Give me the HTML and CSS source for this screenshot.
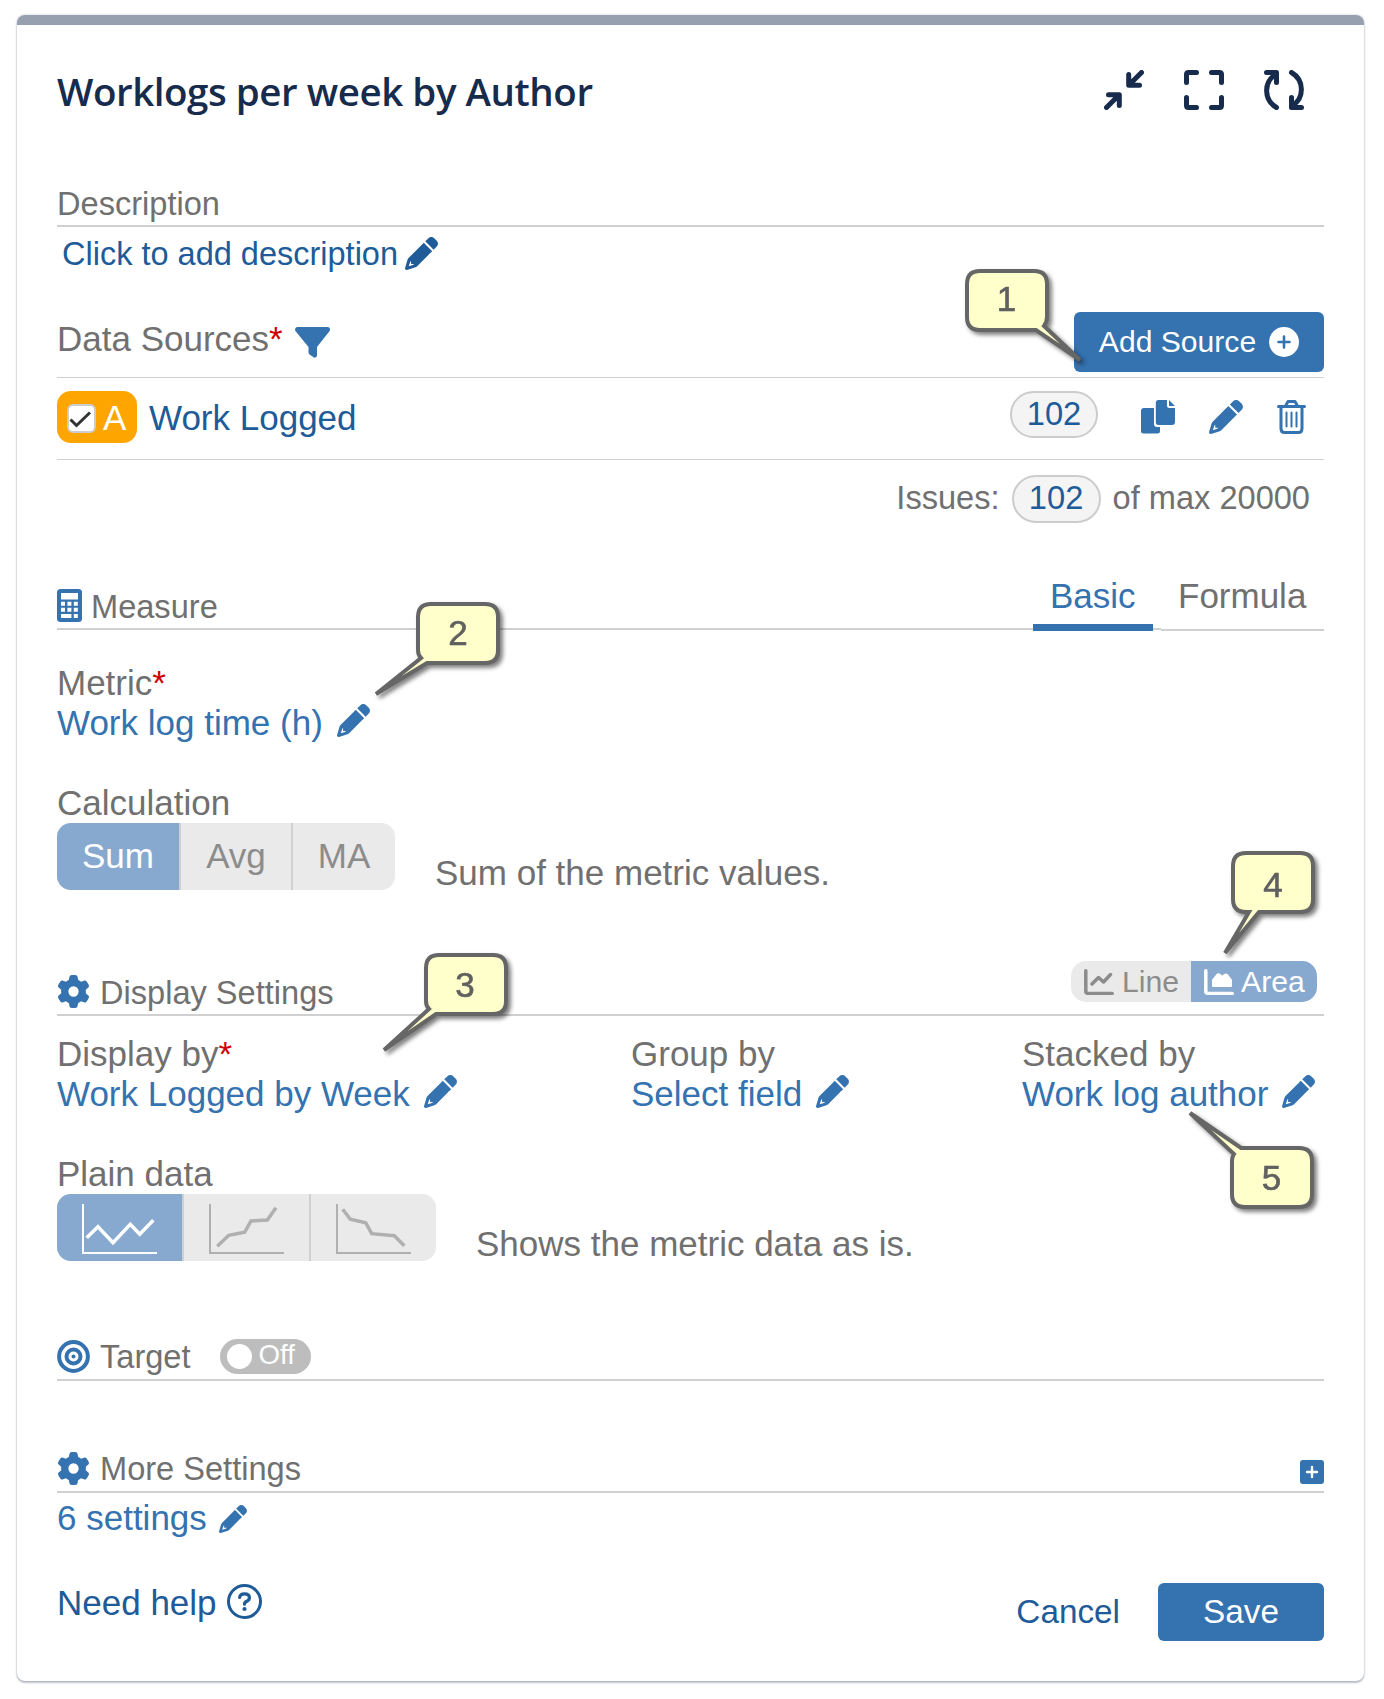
FILE: index.html
```html
<!DOCTYPE html>
<html lang="en">

<head>
     <meta charset="UTF-8">
     <meta name="viewport" content="width=device-width, initial-scale=1.0">
     <title>Worklogs per week by Author</title>
     <link rel="stylesheet" href="styles.css">
</head>

<body>
     <!-- Shared icons -->
     <svg class="sprite" aria-hidden="true">
          <symbol id="pencil" viewBox="0 0 512 512">
               <path d="M410.3 231l11.3-11.3-33.9-33.9-62.1-62.1L291.7 89.8l-11.3 11.3-22.6 22.6L58.6 322.9c-10.4 10.4-18 23.3-22.2 37.4L1 480.7c-2.5 8.4-.2 17.5 6.1 23.7s15.3 8.5 23.7 6.1l120.3-35.4c14.1-4.2 27-11.8 37.4-22.2L387.7 253.7 410.3 231zM94 368v42q0 8 8 8h42l-22 16-64 20 20-64zM362.7 18.7L348.3 33.2 325.7 55.8 314.3 67.1l33.9 33.9 62.1 62.1 33.9 33.9 11.3-11.3 22.6-22.6 14.5-14.5c25-25 25-65.5 0-90.5L453.3 18.7c-25-25-65.5-25-90.5 0z"/>
          </symbol>
          <symbol id="gear" viewBox="0 0 512 512">
               <path d="M495.9 166.6c3.2 8.7 .5 18.4-6.4 24.6l-43.3 39.4c1.1 8.3 1.7 16.8 1.7 25.4s-.6 17.1-1.7 25.4l43.3 39.4c6.9 6.2 9.6 15.9 6.4 24.6c-4.4 11.9-9.7 23.3-15.8 34.3l-4.7 8.1c-6.6 11-14 21.4-22.1 31.2c-5.9 7.2-15.7 9.6-24.5 6.8l-55.7-17.7c-13.4 10.3-28.2 18.9-44 25.4l-12.5 57.1c-2 9.1-9 16.3-18.2 17.8c-13.8 2.3-28 3.5-42.5 3.5s-28.7-1.2-42.5-3.5c-9.2-1.5-16.2-8.7-18.2-17.8l-12.5-57.1c-15.8-6.5-30.6-15.1-44-25.4L83.1 425.9c-8.8 2.8-18.6 .3-24.5-6.8c-8.1-9.8-15.5-20.2-22.1-31.2l-4.7-8.1c-6.1-11-11.4-22.4-15.8-34.3c-3.2-8.7-.5-18.4 6.4-24.6l43.3-39.4C64.6 273.1 64 264.6 64 256s.6-17.1 1.7-25.4L22.4 191.2c-6.9-6.2-9.6-15.9-6.4-24.6c4.4-11.9 9.7-23.3 15.8-34.3l4.7-8.1c6.6-11 14-21.4 22.1-31.2c5.9-7.2 15.7-9.6 24.5-6.8l55.7 17.7c13.4-10.3 28.2-18.9 44-25.4l12.5-57.1c2-9.1 9-16.3 18.2-17.8C227.3 1.2 241.5 0 256 0s28.7 1.2 42.5 3.5c9.2 1.5 16.2 8.7 18.2 17.8l12.5 57.1c15.8 6.5 30.6 15.1 44 25.4l55.7-17.7c8.8-2.8 18.6-.3 24.5 6.8c8.1 9.8 15.5 20.2 22.1 31.2l4.7 8.1c6.1 11 11.4 22.4 15.8 34.3zM256 336a80 80 0 1 0 0-160 80 80 0 1 0 0 160z"/>
          </symbol>
     </svg>

     <main class="card">
          <header class="card-header">
               <h1>Worklogs per week by Author</h1>
               <div class="window-icons">
                    <svg viewBox="0 0 40 40">
                         <path d="M37.500 2.500 25 15M24.700 4.500v10.700H35.500"/>
                         <path d="M2.500 37.500 15 25M15.300 35.500V24.800H4.500"/>
                    </svg>
                    <svg viewBox="0 0 40 40">
                         <path d="M2.500 12.500V4.500q0-2 2-2h8M27.500 2.500h8q2 0 2 2v8M37.500 27.500v8q0 2-2 2h-8M12.500 37.500h-8q-2 0-2-2v-8"/>
                    </svg>
                    <svg viewBox="0 0 40 40">
                         <path d="M12.500 37.500C-.500 30-.500 12 11.500 4.500M2.500 2.500h10V12.500"/>
                         <path d="M27.500 2.500C40.500 10 40.500 28 28.500 35.500M37.500 37.500h-10V27.500"/>
                    </svg>
               </div>
          </header>

          <section class="description">
               <div class="section-head">
                    <h2>Description</h2>
               </div>
               <a class="add-description">Click to add description<svg class="pencil"><use href="#pencil"/></svg></a>
          </section>

          <section class="sources">
               <div class="sources-head">
                    <span>Data Sources<b class="required">*</b></span>
                    <svg class="funnel" viewBox="0 0 35 32"><path d="M2 0h31q3 1 1.600 4L22 20v9q-1 2-3 1.600L14.500 27.500q-1-.800-1-2V20L.400 4Q-.800 1 2 0z"/></svg>
                    <button class="btn btn-add">Add Source
                         <svg viewBox="0 0 30 30"><circle cx="15" cy="15" r="15" fill="#fff"/><path d="M15 9.500v11M9.500 15h11" stroke="#3572b0" stroke-width="2.600" stroke-linecap="round"/></svg>
                    </button>
               </div>
               <div class="source-row">
                    <div class="source-badge">
                         <svg viewBox="0 0 29 29"><rect x="1" y="1" width="27" height="27" rx="5" fill="#fff" stroke="#ccc" stroke-width="2"/><path d="M3.500 15.500 9.500 21.500 23 8.500" fill="none" stroke="#333" stroke-width="3"/></svg>A
                    </div>
                    <a class="source-name">Work Logged</a>
                    <span class="count">102</span>
                    <div class="source-actions">
                         <svg viewBox="0 0 34 34">
                              <path d="M3 8h10v16q0 3 3 3h3v4q0 2.500-2.500 2.500H2.500Q0 33.500 0 31V11q0-3 3-3z"/>
                              <path d="M17.500 0H26v5.500Q26 8 28.500 8H34v14q0 3-3 3H17.500q-2.700 0-2.700-3V3q0-3 2.700-3zM28 0l6 6h-6z"/>
                         </svg>
                         <svg><use href="#pencil"/></svg>
                         <svg class="trash" viewBox="0 0 28 34">
                              <path d="M1 6.500h26M8 6l2.500-4.500h7L20 6M3.500 7v21.500q0 4 3.500 4h14q3.500 0 3.500-4V7"/>
                              <path class="thin" d="M9 12.500v14M14 12.500v14M19 12.500v14"/>
                         </svg>
                    </div>
               </div>
               <div class="issues">Issues: <span class="count">102</span> of max 20000</div>
          </section>

          <section class="measure">
               <div class="section-head">
                    <svg class="calculator" viewBox="0 0 25 33">
                         <rect width="25" height="33" rx="3.500"/>
                         <path fill="#fff" d="M4 4h17v6.500H4zM4 12.700h4v4H4zM10.400 12.700h4v4h-4zM16.800 12.700h4v4h-4zM4 18.800h4v4H4zM10.400 18.800h4v4h-4zM16.800 18.800h4v4h-4zM4 25h10.400v4H4zM16.800 25h4v4h-4z"/>
                    </svg>
                    <h2>Measure</h2>
                    <nav class="tabs">
                         <a class="tab active">Basic</a>
                         <a class="tab">Formula</a>
                    </nav>
               </div>
               <div class="field metric">
                    <label>Metric<b class="required">*</b></label>
                    <a>Work log time (h)<svg class="pencil"><use href="#pencil"/></svg></a>
               </div>
               <div class="field">
                    <label>Calculation</label>
                    <div class="choice">
                         <div class="segments calculation">
                              <button class="active">Sum</button>
                              <button>Avg</button>
                              <button>MA</button>
                         </div>
                         <p>Sum of the metric values.</p>
                    </div>
               </div>
          </section>

          <section class="display">
               <div class="section-head">
                    <svg class="section-icon"><use href="#gear"/></svg>
                    <h2>Display Settings</h2>
                    <div class="chart-type">
                         <button>
                              <svg viewBox="0 0 30 26"><path d="M1.800 1.800V22q0 2.400 2.400 2.400H28.200M8 15l6.500-6.500 5 4.500 7-7.500"/></svg>Line
                         </button>
                         <button class="active">
                              <svg viewBox="0 0 30 26"><path d="M1.800 1.800V22q0 2.400 2.400 2.400H28.200"/><path class="fill" d="M9 11l4-5q1.500-1.500 3 0l2 2 2.500-2q1.500-1 3 .500L27 11v6H9z"/></svg>Area
                         </button>
                    </div>
               </div>
               <div class="columns">
                    <div class="field">
                         <label>Display by<b class="required">*</b></label>
                         <a>Work Logged by Week<svg class="pencil"><use href="#pencil"/></svg></a>
                    </div>
                    <div class="field">
                         <label>Group by</label>
                         <a>Select field<svg class="pencil"><use href="#pencil"/></svg></a>
                    </div>
                    <div class="field">
                         <label>Stacked by</label>
                         <a>Work log author<svg class="pencil"><use href="#pencil"/></svg></a>
                    </div>
               </div>
               <div class="field">
                    <label>Plain data</label>
                    <div class="choice">
                         <div class="segments plain-data">
                              <button class="active"><svg viewBox="0 0 75 50"><path class="axis" d="M1 0v49h74"/><path d="M4.700 33.700 16 22.700l15 16 17.300-18.400 9.400 10 13.600-14"/></svg></button>
                              <button><svg viewBox="0 0 75 50"><path class="axis" d="M1 0v49h74"/><path d="M8.300 42.300l11.400-11 16-3L42 17l16.300-1L67 3.700"/></svg></button>
                              <button><svg viewBox="0 0 75 50"><path class="axis" d="M1 0v49h74"/><path d="M6.700 5.300l7.600 10 15.400 3.400 6 11 22.600 2 10 10"/></svg></button>
                         </div>
                         <p>Shows the metric data as is.</p>
                    </div>
               </div>
          </section>

          <section class="target">
               <div class="section-head">
                    <svg class="section-icon" viewBox="0 0 33 33"><g fill="none" stroke="#3572b0" stroke-width="4"><circle cx="16.500" cy="16.500" r="14.400"/><circle cx="16.500" cy="16.500" r="7"/></g><circle cx="16.500" cy="16.500" r="2"/></svg>
                    <h2>Target</h2>
                    <span class="toggle">Off</span>
               </div>
          </section>

          <section class="more">
               <div class="section-head">
                    <svg class="section-icon"><use href="#gear"/></svg>
                    <h2>More Settings</h2>
                    <svg class="expand" viewBox="0 0 24 24"><rect width="24" height="24" rx="3"/><path d="M12 7v10M7 12h10" stroke="#fff" stroke-width="2.400" stroke-linecap="round"/></svg>
               </div>
               <div class="field">
                    <a>6 settings<svg class="pencil"><use href="#pencil"/></svg></a>
               </div>
          </section>

          <footer>
               <a class="help">Need help
                    <svg viewBox="0 0 35 35"><circle cx="17.500" cy="17.500" r="16" stroke-width="3"/><path d="M12.600 13.500q.400-3.700 5-3.700 4.800 0 4.800 3.900 0 2.300-2.600 3.600-2.300 1.100-2.300 2.900" stroke-width="3.200" stroke-linecap="round"/><circle class="dot" cx="17.500" cy="25" r="2.100"/></svg>
               </a>
               <a class="cancel">Cancel</a>
               <button class="btn btn-save">Save</button>
          </footer>
     </main>

     <!-- Numbered callouts over the form -->
     <svg class="callout callout-1" width="130" height="110"><path d="M15 2H69Q82 2 82 15V48Q82 53 79 57L115 91 71 61H15Q2 61 2 48V15Q2 2 15 2z"/><text x="41.500" y="42">1</text></svg>
     <svg class="callout callout-2" width="140" height="110"><path d="M57 2H111Q124 2 124 15V48Q124 61 111 61H53L2 92 47 56Q44 53 44 48V15Q44 2 57 2z"/><text x="84" y="43">2</text></svg>
     <svg class="callout callout-3" width="140" height="110"><path d="M57 2H111Q124 2 124 15V48Q124 61 111 61H54L2 97 47 56Q44 53 44 48V15Q44 2 57 2z"/><text x="83" y="43.500">3</text></svg>
     <svg class="callout callout-4" width="110" height="120"><path d="M22 2H76Q89 2 89 15V48Q89 61 76 61H35L1 102 25 61H22Q9 61 9 48V15Q9 2 22 2z"/><text x="49" y="45.500">4</text></svg>
     <svg class="callout callout-5" width="140" height="110"><path d="M53 38H111Q124 38 124 51V84Q124 97 111 97H57Q44 97 44 84V51Q44 47 46 44L2 3 53 38z"/><text x="83.500" y="80">5</text></svg>
</body>

</html>
```

FILE: styles.css
```css
:root {
     --blue: #3572b0;
     --dark-blue: #205b99;
     --navy: #172b4d;
     --grey: #707070;
     --line: #d0d0d0;
     --segment: #eaeaea;
     --segment-active: #87a9d0;
}

*,
*::before,
*::after {
     box-sizing: border-box;
}

body {
     position: relative;
     margin: 0;
     padding: 15px 20px 18px 17px;
     background: #fff;
     color: var(--grey);
     font-family: "Liberation Sans", Arial, sans-serif;
     font-size: 35px;
     line-height: 40px;
}

h1,
h2,
p {
     margin: 0;
}

svg {
     display: block;
     flex: none;
     fill: var(--blue);
}

button {
     border: 0;
     padding: 0;
     background: none;
     font: inherit;
}

a {
     color: var(--blue);
}

.sprite {
     position: absolute;
     width: 0;
     height: 0;
}

.card {
     width: 1347px;
     padding: 40px 40px;
     border-top: 10px solid #97a0af;
     border-radius: 8px;
     box-shadow: 0 2px 2px rgba(9, 30, 66, .25), 0 0 2px rgba(9, 30, 66, .31);
}

/** Header **/
.card-header {
     display: flex;
     align-items: center;
     justify-content: space-between;
     height: 50px;
     padding-right: 20px;
}

h1 {
     padding-top: 2px;
     color: var(--navy);
     font-family: "Open Sans", "Noto Sans", sans-serif;
     font-size: 38.5px;
     font-weight: 600;
     letter-spacing: -.45px;
     line-height: 50px;
     white-space: nowrap;
}

.window-icons {
     display: flex;
     gap: 40px;
}

.window-icons svg {
     width: 40px;
     height: 40px;
     fill: none;
     stroke: var(--navy);
     stroke-width: 5;
     stroke-linecap: round;
     stroke-linejoin: round;
}

/** Section headings **/
.section-head {
     display: flex;
     align-items: flex-end;
     border-bottom: 2px solid var(--line);
}

h2 {
     padding-bottom: 1px;
     font-size: 32.6px;
     font-weight: 400;
     line-height: 40px;
}

.section-icon {
     width: 33px;
     height: 33px;
     margin: 0 10px 6px 0;
}

.required {
     color: #d00000;
     font-weight: 400;
}

.pencil {
     width: 33px;
     height: 33px;
     margin: 1px 0 0 14px;
}

.btn {
     border-radius: 6px;
     background: var(--blue);
     color: #fff;
}

/** Description **/
.description {
     margin-top: 68px;
}

.description .section-head {
     height: 44px;
}

.add-description {
     display: flex;
     margin: 7px 0 0 5px;
     color: var(--dark-blue);
     font-size: 32.5px;
}

.add-description .pencil {
     margin: 3px 0 0 7px;
     fill: var(--dark-blue);
}

/** Data sources **/
.sources {
     margin-top: 38px;
}

.sources-head {
     display: flex;
     height: 66px;
     border-bottom: 1px solid var(--line);
}

.sources-head span {
     padding-top: 7px;
}

.funnel {
     width: 35px;
     height: 32px;
     margin: 15px 0 0 12px;
}

.btn-add {
     display: flex;
     align-items: center;
     justify-content: center;
     gap: 13px;
     width: 250px;
     height: 60px;
     margin-left: auto;
     font-size: 30.1px;
}

.btn-add svg {
     width: 30px;
     height: 30px;
}

.source-row {
     display: flex;
     height: 82px;
     padding: 13px 18px 0 0;
     border-bottom: 1px solid var(--line);
}

.source-badge {
     display: flex;
     align-items: center;
     gap: 7px;
     width: 80px;
     height: 52px;
     padding: 2px 0 0 10px;
     border-radius: 14px;
     background: #ffa500;
     color: #fff;
}

.source-badge svg {
     width: 29px;
     height: 29px;
}

.source-name {
     margin-left: 12px;
     color: var(--dark-blue);
     line-height: 53px;
}

.count {
     width: 88px;
     height: 47px;
     border: 2px solid #ccc;
     border-radius: 24px;
     background: #f4f4f4;
     color: var(--dark-blue);
     font-size: 32.7px;
     line-height: 42px;
     text-align: center;
}

.source-row .count {
     margin-left: auto;
}

.source-actions {
     display: flex;
     gap: 34px;
     margin: 9px 0 0 43px;
}

.source-actions svg {
     width: 34px;
     height: 34px;
}

.source-actions .trash {
     width: 29px;
     fill: none;
     stroke: var(--blue);
     stroke-width: 3;
     stroke-linecap: round;
     stroke-linejoin: round;
}

.trash .thin {
     stroke-width: 2;
}

.issues {
     display: flex;
     justify-content: flex-end;
     gap: 12px;
     padding: 15px 14px 0 0;
     font-size: 32.6px;
     line-height: 45px;
}

.issues .count {
     width: 89px;
     height: 48px;
}

/** Measure **/
.measure {
     margin-top: 53px;
}

.measure .section-head {
     height: 54px;
}

.calculator {
     width: 25px;
     height: 33px;
     margin: 0 9px 6px 0;
}

.tabs {
     display: flex;
     align-self: flex-start;
     gap: 8px;
     margin-left: auto;
}

.tab {
     width: 163px;
     height: 55px;
     padding-left: 17px;
     border-bottom: 2px solid var(--line);
     background: #fff;
     color: var(--grey);
}

.tab.active {
     width: 120px;
     border-bottom: 7px solid var(--blue);
     color: var(--blue);
}

.field {
     margin-top: 40px;
}

.metric {
     margin-top: 33px;
}

.field label {
     display: block;
}

.field a {
     display: flex;
     white-space: nowrap;
}

.choice {
     display: flex;
     gap: 40px;
     height: 67px;
}

.choice p {
     padding-top: 30px;
}

.segments {
     display: flex;
     border-radius: 14px;
     background: var(--segment);
     color: #8c8c8c;
     overflow: hidden;
}

.segments button {
     color: inherit;
     border-right: 2px solid var(--line);
}

.segments button:last-child {
     border-right: 0;
}

.segments .active,
.chart-type .active {
     background: var(--segment-active);
     color: #fff;
}

.calculation button {
     width: 112px;
     padding-bottom: 1px;
}

.calculation button:first-child {
     width: 124px;
}

.calculation button:last-child {
     width: 102px;
}

/** Display settings **/
.display {
     margin-top: 71px;
}

.display .section-head {
     height: 55px;
}

.chart-type {
     display: flex;
     align-self: flex-start;
     margin: 0 7px 0 auto;
     height: 41px;
     border-radius: 15px;
     background: var(--segment);
     overflow: hidden;
}

.chart-type button {
     display: flex;
     align-items: center;
     gap: 8px;
     width: 120px;
     padding: 1px 0 0 13px;
     color: #8c8c8c;
     font-size: 30.2px;
}

.chart-type .active {
     width: 126px;
     gap: 7px;
}

.chart-type svg {
     width: 30px;
     height: 26px;
     fill: none;
     stroke: currentColor;
     stroke-width: 3.500;
     stroke-linecap: round;
     stroke-linejoin: round;
}

.chart-type .fill {
     fill: #fff;
     stroke-width: 2;
}

.columns {
     display: grid;
     grid-template-columns: 574px 391px 1fr;
     margin-top: 18px;
}

.columns .field {
     margin-top: 0;
}

.plain-data button {
     width: 127px;
     padding: 10px 0 0 25px;
     display: flex;
}

.plain-data button:last-child {
     width: 125px;
}

.plain-data svg {
     width: 75px;
     height: 50px;
     fill: none;
     stroke: #b0b0b0;
     stroke-width: 3.500;
}

.plain-data .axis {
     stroke-width: 2;
}

.plain-data .active svg {
     stroke: #fff;
}

/** Target **/
.target {
     margin-top: 75px;
}

.target .section-head,
.more .section-head {
     height: 45px;
}

.target h2,
.more h2 {
     padding-bottom: 2px;
}

.toggle {
     display: flex;
     align-items: center;
     gap: 7px;
     width: 91px;
     height: 35px;
     margin: 0 0 5px 29px;
     padding: 0 0 4px 7px;
     border-radius: 18px;
     background: #bdbdbd;
     color: #fff;
     font-size: 27.7px;
     line-height: 31px;
}

.toggle::before {
     content: "";
     width: 25px;
     height: 25px;
     margin-top: 4px;
     border-radius: 50%;
     background: #fff;
}

/** More settings **/
.more {
     margin-top: 67px;
}

.expand {
     width: 24px;
     height: 24px;
     margin: 0 0 7px auto;
}

.more .field {
     margin-top: 5px;
}

.more .pencil {
     width: 28px;
     height: 28px;
     margin: 7px 0 0 12px;
}

/** Footer **/
footer {
     display: flex;
     align-items: center;
     height: 58px;
     margin-top: 45px;
}

footer a {
     color: var(--dark-blue);
}

.help {
     display: flex;
     align-self: flex-start;
     gap: 10px;
}

.help svg {
     width: 35px;
     height: 35px;
     margin-top: 1px;
     fill: none;
     stroke: var(--dark-blue);
}

.help .dot {
     fill: var(--dark-blue);
     stroke: none;
}

.cancel,
.btn-save {
     font-size: 33.3px;
}

.cancel {
     margin: 0 38px 0 auto;
}

.btn-save {
     width: 166px;
     height: 58px;
}

/** Callouts **/
.callout {
     position: absolute;
     overflow: visible;
     fill: #ffffcc;
     stroke: #666;
     stroke-width: 4;
     stroke-miterlimit: 12;
     filter: drop-shadow(3px 3px 2px rgba(0, 0, 0, .5));
}

.callout text {
     fill: #606060;
     stroke: #606060;
     stroke-width: .6;
     font-size: 35px;
     text-anchor: middle;
}

.callout-1 {
     left: 965px;
     top: 269px;
}

.callout-2 {
     left: 374px;
     top: 602px;
}

.callout-3 {
     left: 382px;
     top: 953px;
}

.callout-4 {
     left: 1224px;
     top: 851px;
}

.callout-5 {
     left: 1188px;
     top: 1110px;
}
```
